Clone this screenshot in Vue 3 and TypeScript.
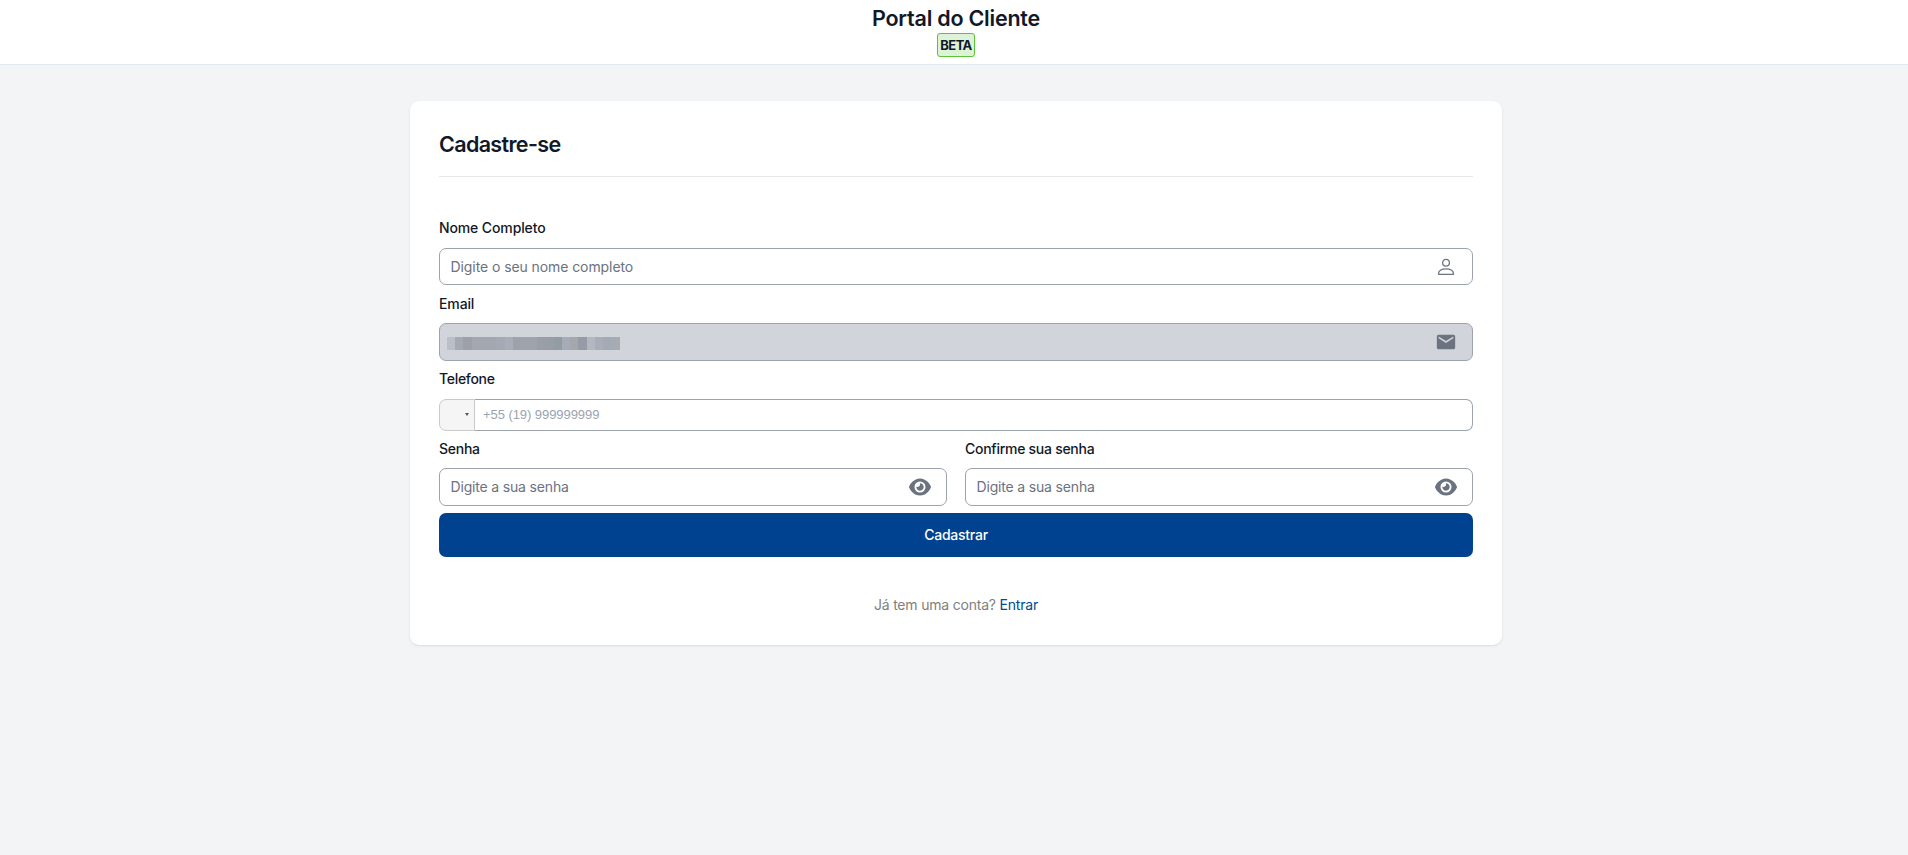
<script setup lang="ts">
import { ref } from 'vue'

const fullName = ref('')
const phone = ref('')
const password = ref('')
const confirmation = ref('')
const showPassword = ref(false)
const showConfirmation = ref(false)

const eyePath =
  'M288 32c-80.8 0-145.5 36.8-192.6 80.6C48.6 156 17.3 208 2.5 243.7c-3.3 7.9-3.3 16.7 0 24.6C17.3 304 48.6 356 95.4 399.4C142.5 443.2 207.2 480 288 480s145.5-36.8 192.6-80.6c46.8-43.5 78.1-95.4 93-131.1c3.3-7.9 3.3-16.7 0-24.6c-14.9-35.7-46.2-87.7-93-131.1C433.5 68.8 368.8 32 288 32zM144 256a144 144 0 1 1 288 0 144 144 0 1 1-288 0zm144-64c0 35.3-28.7 64-64 64c-7.1 0-13.9-1.2-20.3-3.3c-5.5-1.8-11.9 1.6-11.7 7.4c.3 6.9 1.3 13.8 3.2 20.7c13.7 51.2 66.4 81.6 117.6 67.9s81.6-66.4 67.9-117.6c-11.1-41.5-47.8-69.4-88.6-71.1c-5.8-.2-9.2 6.1-7.4 11.7c2.1 6.4 3.3 13.2 3.3 20.3z'

interface Segment { width: number; color: string }

// Masked e-mail address, drawn as a row of blocks.
const mask: Segment[] = [
  { width: 8, color: '#bbbfc8' },
  { width: 8, color: '#a5a9b2' },
  { width: 9, color: '#9da0a9' },
  { width: 8, color: '#a3a7af' },
  { width: 8, color: '#a3a8af' },
  { width: 8, color: '#a1a8af' },
  { width: 9, color: '#a5a9b3' },
  { width: 8, color: '#a9adb7' },
  { width: 8, color: '#9ea2ab' },
  { width: 8, color: '#9fa3ab' },
  { width: 8, color: '#9fa3ac' },
  { width: 9, color: '#9a9ea7' },
  { width: 8, color: '#999da6' },
  { width: 8, color: '#929ca4' },
  { width: 8, color: '#a6abb8' },
  { width: 8, color: '#a4a8ad' },
  { width: 9, color: '#969ca7' },
  { width: 8, color: '#b3b7c0' },
  { width: 8, color: '#a9adb7' },
  { width: 8, color: '#a4aab3' },
  { width: 9, color: '#a7abb4' },
]
</script>

<template>
  <div class="page">
    <header class="topbar">
      <h1 class="brand">Portal do Cliente</h1>
      <span class="badge">BETA</span>
    </header>
    <main class="card">
      <h2 class="title">Cadastre-se</h2>
      <form class="form" @submit.prevent>
        <label class="label name-label" for="name">Nome Completo</label>
        <div class="field">
          <input id="name" v-model="fullName" class="input name-input" placeholder="Digite o seu nome completo" />
          <svg class="icon" viewBox="0 0 20 20" fill="none" stroke="currentColor" stroke-width="1.3">
            <circle cx="10" cy="5.8" r="3.4" />
            <path d="M2.6 17.3v-1.1c0-2.5 3.2-4.4 7.4-4.4s7.4 1.9 7.4 4.4v1.1z" stroke-linejoin="round" />
          </svg>
        </div>

        <span class="label email-label">Email</span>
        <div class="field disabled">
          <div class="mask">
            <span v-for="(s, i) in mask" :key="i" :style="{ width: s.width + 'px', background: s.color }"></span>
          </div>
          <svg class="icon mail" viewBox="0 0 24 24" fill="currentColor">
            <path d="M20 4H4c-1.1 0-1.99.9-1.99 2L2 18c0 1.1.9 2 2 2h16c1.1 0 2-.9 2-2V6c0-1.1-.9-2-2-2zm0 4l-8 5-8-5V6l8 5 8-5v2z" />
          </svg>
        </div>

        <label class="label phone-label" for="phone">Telefone</label>
        <div class="phone">
          <button class="country" type="button" aria-label="País"><i class="caret"></i></button>
          <input id="phone" v-model="phone" class="phone-input" placeholder="+55 (19) 999999999" />
        </div>

        <div class="passwords">
          <div class="column">
            <label class="label senha-label" for="pass">Senha</label>
            <div class="field">
              <input id="pass" v-model="password" :type="showPassword ? 'text' : 'password'" class="input pass-input" placeholder="Digite a sua senha" />
              <svg class="icon eye" viewBox="0 0 576 512" @click="showPassword = !showPassword">
                <path fill="currentColor" fill-rule="evenodd" :d="eyePath" />
              </svg>
            </div>
          </div>
          <div class="column">
            <label class="label confirm-label" for="confirm">Confirme sua senha</label>
            <div class="field">
              <input id="confirm" v-model="confirmation" :type="showConfirmation ? 'text' : 'password'" class="input pass-input" placeholder="Digite a sua senha" />
              <svg class="icon eye" viewBox="0 0 576 512" @click="showConfirmation = !showConfirmation">
                <path fill="currentColor" fill-rule="evenodd" :d="eyePath" />
              </svg>
            </div>
          </div>
        </div>
        <button class="submit" type="submit">Cadastrar</button>
      </form>
      <p class="login"><span class="question">Já tem uma conta?</span> <a class="link" href="#">Entrar</a></p>
    </main>
  </div>
</template>

<style>
body { margin: 0; background: #f3f4f6; }
</style>

<style scoped>
* { box-sizing: border-box; }
.page {
  min-height: 855px;
  background: #f3f4f6;
  color: #111827;
  font-family: Inter, "Liberation Sans", sans-serif;
  font-size: 14px;
}
.topbar {
  height: 65px;
  padding: 3px 0 0 4px;
  display: flex;
  flex-direction: column;
  align-items: center;
  background: #fff;
  border-bottom: 1px solid #e2e8f0;
}
.brand {
  margin: 0;
  font-size: 21.5px;
  line-height: 30px;
  font-weight: 600;
  letter-spacing: -0.22px;
}
.badge {
  width: 38px;
  height: 24px;
  display: flex;
  align-items: center;
  justify-content: center;
  border: 1px solid #5ac434;
  border-radius: 3px;
  background: #ddf3d7;
  font-size: 13px;
  font-weight: 700;
  letter-spacing: -0.6px;
}
.card {
  width: 1092px;
  height: 544px;
  margin: 36px 0 0 410px;
  padding: 28px 29px 0;
  background: #fff;
  border-radius: 9px;
  box-shadow: 0 1px 3px rgba(0, 0, 0, .08), 0 1px 2px -1px rgba(0, 0, 0, .08);
}
.title {
  margin: 0;
  height: 48px;
  border-bottom: 1px solid #e5e7eb;
  font-size: 21.5px;
  line-height: 30px;
  font-weight: 600;
  letter-spacing: -0.65px;
}
.form {
  padding-top: 41px;
  display: flex;
  flex-direction: column;
}
.label {
  display: block;
  height: 30px;
  line-height: 20px;
  font-weight: 500;
  letter-spacing: -0.12px;
}
.email-label, .phone-label, .senha-label, .confirm-label {
  height: 38px;
  padding-top: 9px;
}
.phone-label { padding-top: 8px; letter-spacing: -0.3px; }
.senha-label, .confirm-label { height: 37px; padding-top: 8px; }
.senha-label, .confirm-label { letter-spacing: -0.27px; }
.field {
  height: 38px;
  display: flex;
  align-items: center;
  justify-content: space-between;
  padding: 0 16px 0 10.5px;
  border: 1px solid #9ca3af;
  border-radius: 7px;
}
.name-label + .field { height: 37px; }
.input, .phone-input {
  flex: 1;
  min-width: 0;
  height: 100%;
  padding: 0;
  border: 0;
  outline: 0;
  background: transparent;
  font: inherit;
}
.name-input { letter-spacing: -0.08px; }
.pass-input { padding-bottom: 2px; letter-spacing: -0.17px; }
.input::placeholder { color: #6b7280; opacity: 1; }
.icon { flex: none; width: 20px; height: 20px; color: #6b7280; }
.disabled { padding-left: 7px; background: #d1d5db; }
.mask { display: flex; height: 13px; margin-top: 3px; }
.mail { width: 22px; height: 22px; margin-right: -1px; }
.eye { width: 22px; height: 20px; margin-right: -1px; }
.phone { display: flex; height: 32px; }
.country {
  width: 36px;
  padding: 0 5px 0 0;
  display: flex;
  align-items: center;
  justify-content: flex-end;
  border: 1px solid #cacaca;
  border-radius: 7px 0 0 7px;
  background: #f5f5f5;
}
.caret {
  border-left: 2px solid transparent;
  border-right: 2px solid transparent;
  border-top: 3px solid #555;
  margin-top: -1px;
}
.phone-input {
  padding: 0 0 2px 8px;
  border: 1px solid #9ca3af;
  border-left: 0;
  border-radius: 0 7px 7px 0;
  font-family: "Liberation Sans", Arial, sans-serif;
  font-size: 13px;
  letter-spacing: -0.06px;
}
.phone-input::placeholder { color: #9ca3af; opacity: 1; }
.passwords { display: grid; grid-template-columns: 1fr 1fr; gap: 18px; }
.submit {
  height: 44px;
  margin-top: 7px;
  padding: 0 0 1px;
  border: 0;
  border-radius: 7px;
  background: #00428f;
  color: #fff;
  font: 500 14px Inter, sans-serif;
  letter-spacing: -0.25px;
}
.login { margin: 38px 0 0; line-height: 20px; text-align: center; letter-spacing: -0.2px; }
.question { color: #808080; }
.link { color: #004a94; text-decoration: none; }
</style>
